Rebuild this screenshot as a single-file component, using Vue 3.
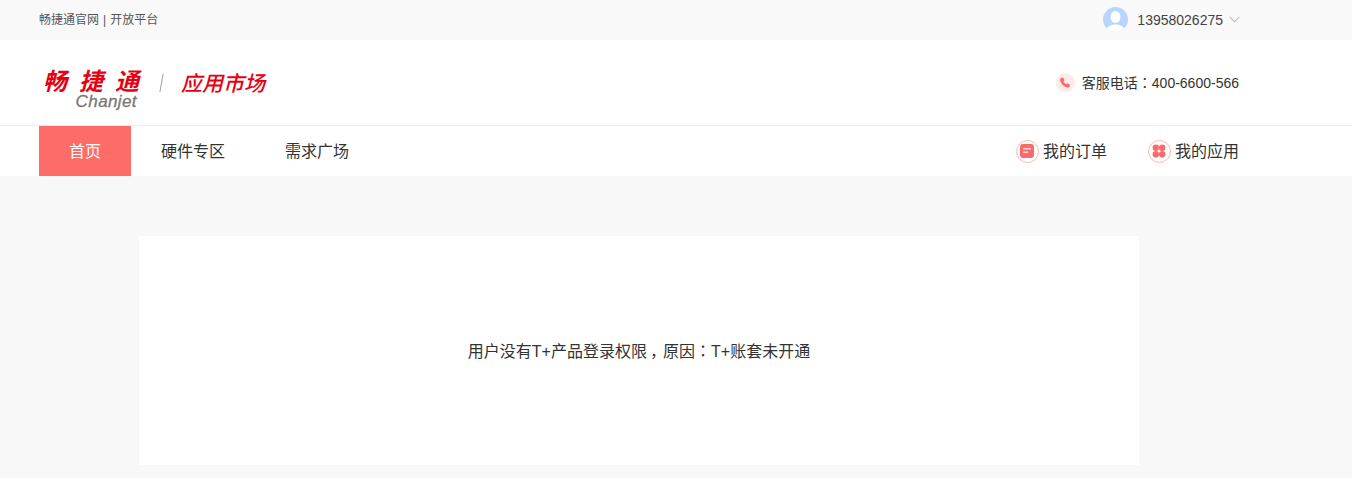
<template>
  <div class="page">
    <div class="top-bar">
      <div class="wrap top-bar__inner">
        <div class="top-bar__links">
          <span>畅捷通官网</span>
          <span class="top-bar__sep">|</span>
          <span>开放平台</span>
        </div>
        <div class="user">
          <svg class="user__avatar" width="25" height="25" viewBox="0 0 25 25">
            <defs>
              <clipPath id="avatar-clip"><circle cx="12.5" cy="12.5" r="12.5" /></clipPath>
            </defs>
            <circle cx="12.5" cy="12.5" r="12.5" fill="#b9d5ff" />
            <g clip-path="url(#avatar-clip)" fill="#fff">
              <ellipse cx="12.5" cy="10" rx="5" ry="6" />
              <path d="M3 25c0-5 4-6.500 7-7.500h5c3 1 7 2.500 7 7.500z" />
            </g>
          </svg>
          <span class="user__phone">13958026275</span>
          <svg class="user__arrow" width="11" height="7" viewBox="0 0 11 7">
            <path d="M.7.9l4.800 4.800L10.300.9" fill="none" stroke="#bbb" stroke-width="1.100" />
          </svg>
        </div>
      </div>
    </div>

    <div class="header">
      <div class="wrap header__inner">
        <div class="logo">
          <div class="logo__brand">
            <span class="logo__cn">畅捷通</span>
            <span class="logo__en">Chanjet</span>
          </div>
          <span class="logo__divider"></span>
          <span class="logo__market">应用市场</span>
        </div>
        <div class="service">
          <span class="service__icon">
            <svg width="12" height="12" viewBox="0 0 11 11">
              <path d="M2.300.8l1.500-.3 1.200 2.500-1 1c.4 1.100 1.300 2 2.500 2.600l1-.9 2.500 1.300-.4 1.600c-.3.900-1.200 1.300-2.100 1C3.900 8.700 1.800 6.300 1 3c-.2-.9.400-1.900 1.300-2.200z" fill="#f96a6a" />
            </svg>
          </span>
          <span class="service__text">客服电话<span class="punct">：</span>400-6600-566</span>
        </div>
      </div>
    </div>

    <div class="nav">
      <div class="wrap nav__inner">
        <div class="nav__items">
          <a v-for="item in navItems" :key="item.label" class="nav__item" :class="{ 'nav__item--active': item.active }">{{ item.label }}</a>
        </div>
        <div class="nav__side">
          <a class="nav__link">
            <span class="nav__icon">
              <svg width="14" height="14" viewBox="0 0 14 14">
                <rect width="14" height="14" rx="3" fill="#fb6a6a" />
                <rect x="3" y="4" width="8" height="1.500" fill="#ffd9d9" />
                <rect x="3" y="7.500" width="5" height="1.500" fill="#ffd9d9" />
              </svg>
            </span>
            <span class="nav__label">我的订单</span>
          </a>
          <a class="nav__link">
            <span class="nav__icon">
              <svg width="14" height="14" viewBox="0 0 14 14" fill="#fb6a6a">
                <circle cx="3.800" cy="3.800" r="3.200" />
                <circle cx="10.200" cy="3.800" r="3.200" />
                <circle cx="3.800" cy="10.200" r="3.200" />
                <circle cx="10.200" cy="10.200" r="3.200" />
              </svg>
            </span>
            <span class="nav__label">我的应用</span>
          </a>
        </div>
      </div>
    </div>

    <div class="wrap main">
      <div class="card"><span>用户没有T+产品登录权限<span class="comma">，</span>原因<span class="punct">：</span>T+账套未开通</span></div>
    </div>
  </div>
</template>

<script setup>
const navItems = [
  { label: '首页', active: true },
  { label: '硬件专区' },
  { label: '需求广场' }
]
</script>

<style>
html, body {
  margin: 0;
  background: #f8f8f8;
}
</style>

<style scoped>
.page {
  height: 478px;
  overflow: hidden;
  background: #f8f8f8;
  color: #333;
  font-family: "Liberation Sans", "Noto Sans CJK SC", sans-serif;
}
.wrap {
  width: 1200px;
  margin-left: 39px;
}
/* centred full-width punctuation, as in the original font */
.punct {
  font-family: "Noto Sans CJK TC", sans-serif;
}
.comma {
  margin-left: 3px;
  letter-spacing: -3px;
}

.top-bar {
  height: 40px;
  background: #f9f9f9;
  font-size: 12px;
}
.top-bar__inner {
  height: 100%;
  display: flex;
  align-items: center;
  justify-content: space-between;
}
.top-bar__links {
  color: #555;
  padding-bottom: 3px;
}
.top-bar__sep {
  margin: 0 4px;
}
.user {
  display: flex;
  align-items: center;
  font-size: 14px;
  color: #444;
  margin-right: -1px;
  padding-bottom: 1px;
}
.user__avatar {
  margin-right: 9px;
}
.user__arrow {
  margin-left: 6px;
}

.header {
  height: 85px;
  background: #fff;
  border-bottom: 1px solid #eee;
}
.header__inner {
  height: 100%;
  display: flex;
  align-items: center;
  justify-content: space-between;
}
.logo {
  display: flex;
  align-items: center;
  padding-left: 4px;
  color: #e60012;
}
.logo__brand {
  display: flex;
  flex-direction: column;
  width: 97px;
  margin-top: 14px;
}
.logo__cn {
  font-size: 24px;
  line-height: 22px;
  font-weight: 700;
  font-style: italic;
  letter-spacing: 12px;
  white-space: nowrap;
}
.logo__en {
  align-self: flex-end;
  margin-top: 1px;
  margin-right: 3px;
  font-size: 17px;
  line-height: 15px;
  font-style: italic;
  letter-spacing: .4px;
  color: #777;
  -webkit-text-stroke: .3px #777;
}
.logo__divider {
  width: 1px;
  height: 18px;
  margin: 0 19px 0 21px;
  background: #9aa0ad;
  transform: skewX(-10deg);
}
.logo__market {
  font-size: 21px;
  font-weight: 500;
  font-style: italic;
  white-space: nowrap;
  padding-bottom: 2px;
}
.service {
  display: flex;
  align-items: center;
  font-size: 14px;
}
.service__icon {
  width: 19px;
  height: 19px;
  margin-right: 7px;
  border-radius: 50%;
  background: #fdeaea;
  display: flex;
  align-items: center;
  justify-content: center;
}
.service__text {
  padding-bottom: 2px;
}

.nav {
  height: 50px;
  background: #fff;
}
.nav__inner {
  height: 100%;
  display: flex;
  justify-content: space-between;
}
.nav__items {
  display: flex;
}
.nav__item {
  height: 50px;
  padding: 0 30px;
  line-height: 52px;
  font-size: 16px;
  color: #333;
}
.nav__item--active {
  background: #fd6c68;
  color: #fff;
}
.nav__side {
  display: flex;
  align-items: center;
  gap: 41px;
}
.nav__link {
  display: flex;
  align-items: center;
  font-size: 16px;
}
.nav__label {
  padding-bottom: 2px;
}
.nav__icon {
  box-sizing: border-box;
  width: 23px;
  height: 23px;
  margin-right: 4px;
  border: 1px solid #ffb5b5;
  border-radius: 50%;
  display: flex;
  align-items: center;
  justify-content: center;
}

.main {
  padding-top: 60px;
}
.card {
  box-sizing: border-box;
  width: 1000px;
  height: 229px;
  margin: 0 auto;
  padding-bottom: 2px;
  background: #fff;
  font-size: 16px;
  display: flex;
  align-items: center;
  justify-content: center;
}
</style>
